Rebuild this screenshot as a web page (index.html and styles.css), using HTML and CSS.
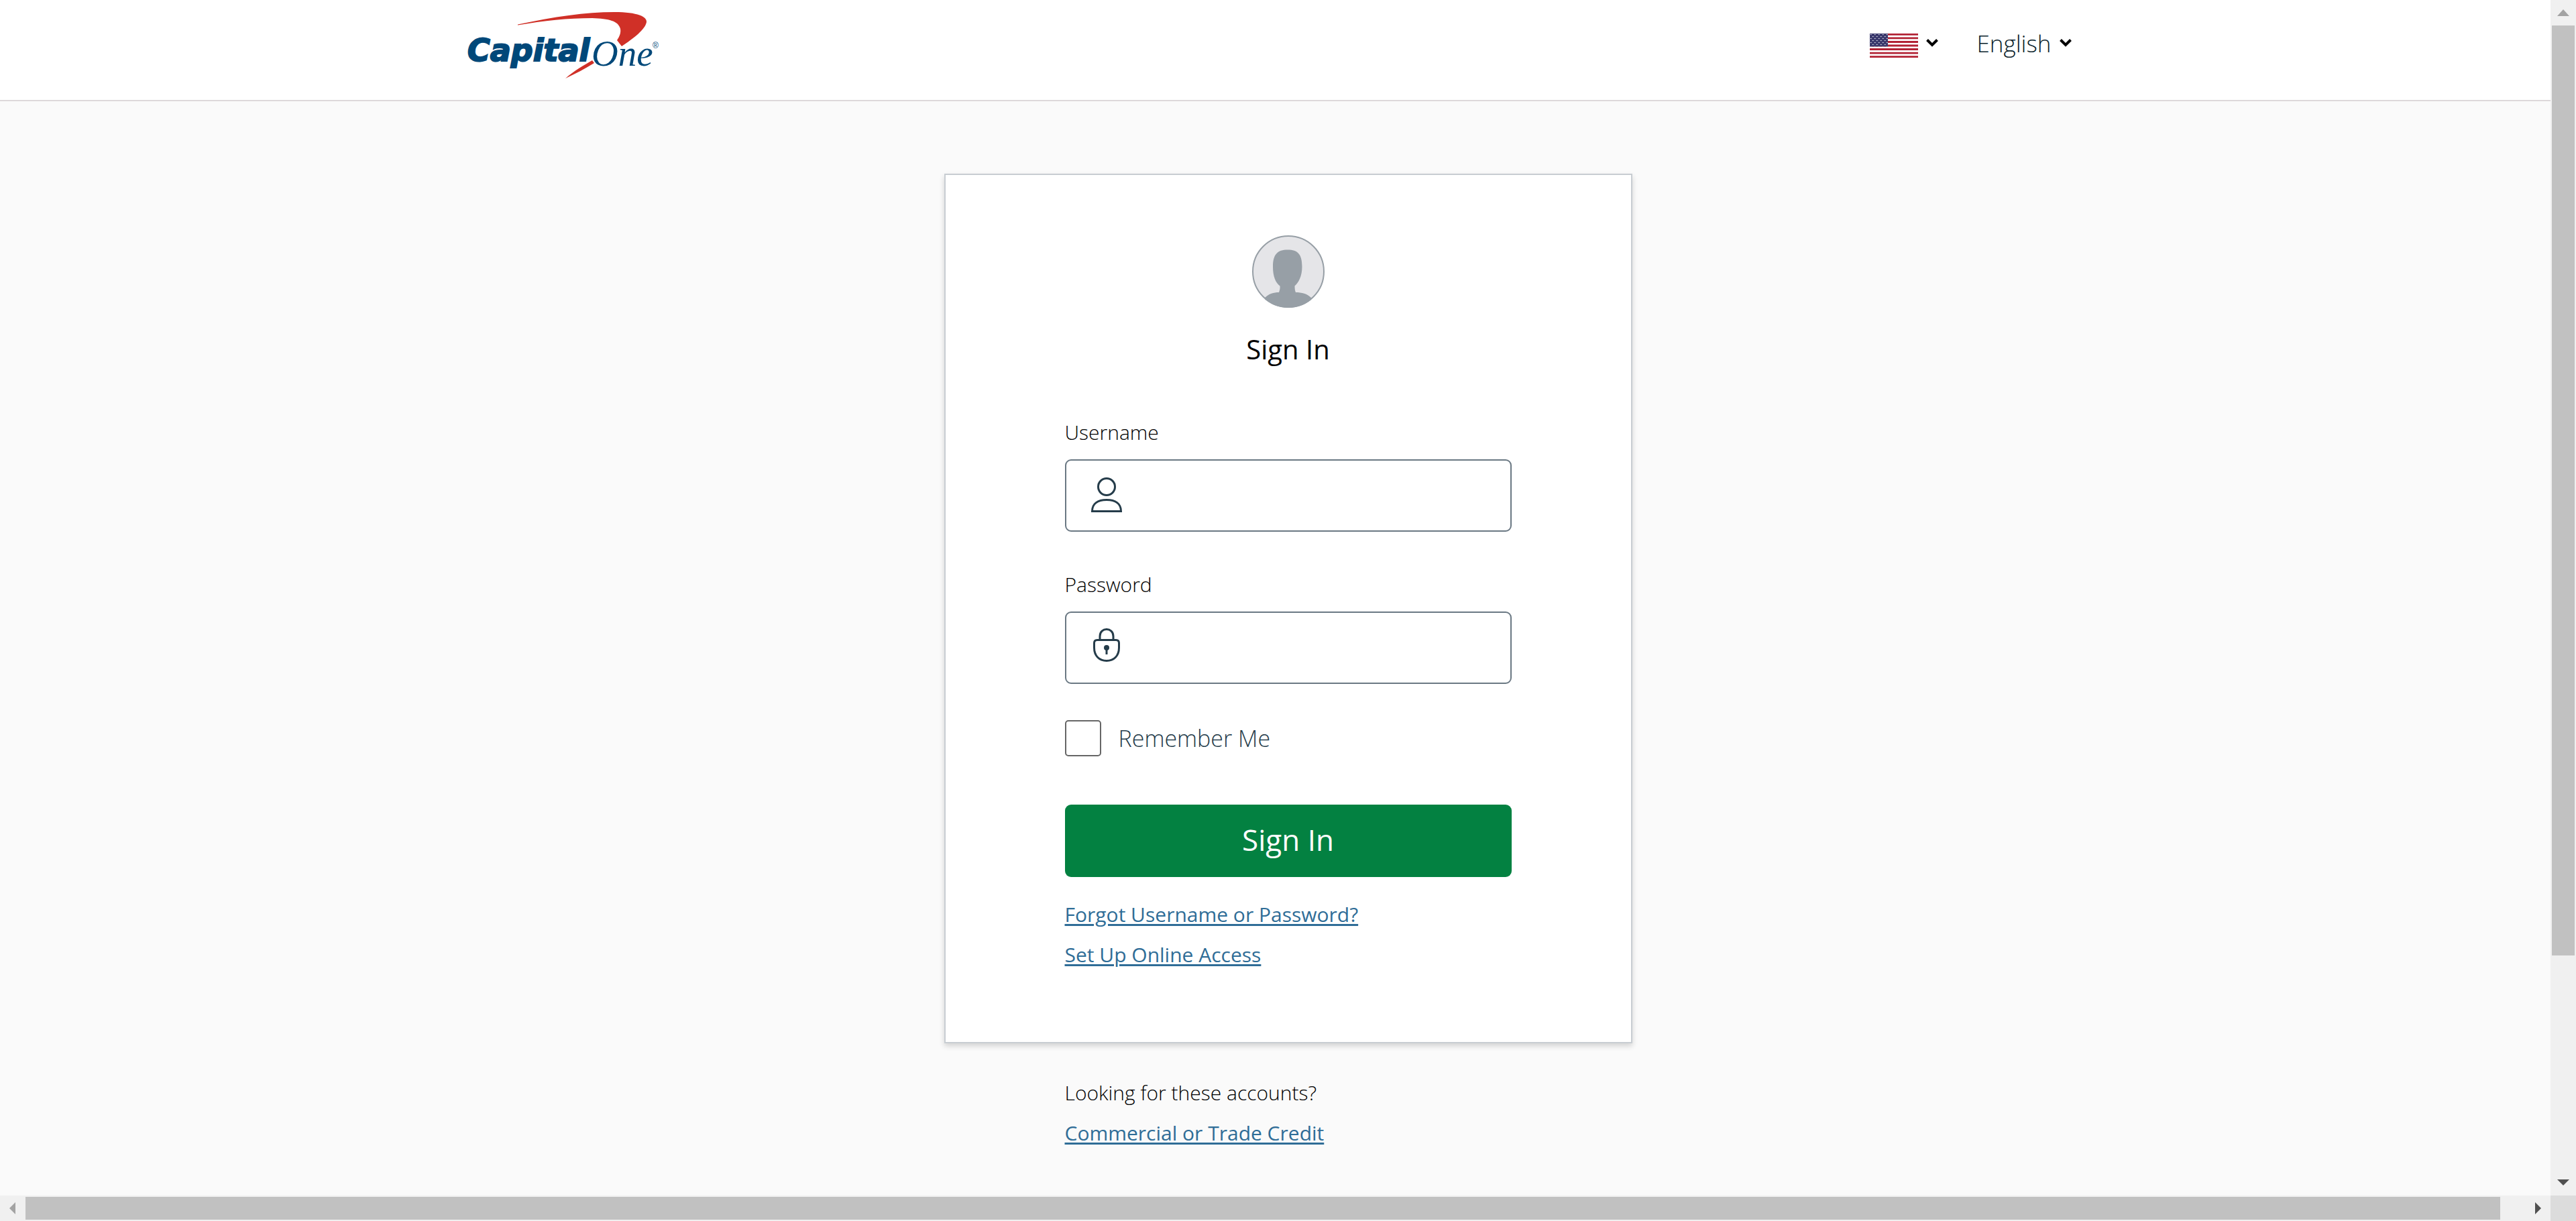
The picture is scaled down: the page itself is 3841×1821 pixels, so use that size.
FILE: index.html
```html
<!DOCTYPE html>
<html lang="en">
<head>
<meta charset="utf-8">
<title>Sign In</title>
<link rel="stylesheet" href="styles.css">
</head>
<body>
<div class="window">
  <div class="viewport">
    <div class="page">
      <header class="site-header">
        <div class="header-inner">
          <a class="logo" href="#" aria-label="Capital One home">
            <svg width="300" height="110" viewBox="690 10 300 110">
              <path fill="#d03027" d="M771 36.500C825 25 872 18 915 18C950 18 964 25 963 33C961 44 944 57 926 69L919 60C923 54 925 49 924 43C921 31 907 28 882 27C846 27 810 31 771 37.500Z"/>
              <path fill="#d03027" d="M882 90C870 97 854 106 842 117C857 110 872 102 885 94Z"/>
              <text class="logo-capital" x="696" y="91">Capital</text>
              <text class="logo-one" x="881" y="98">One</text>
              <text class="logo-mark" x="972" y="72">®</text>
            </svg>
          </a>
          <div class="pickers">
            <button class="picker" type="button" aria-label="Country: United States">
              <svg class="flag" width="72" height="36" viewBox="0 0 72 36">
                <defs>
                  <pattern id="stars" width="6" height="6" patternUnits="userSpaceOnUse">
                    <rect x="1" y="1" width="1" height="1" fill="#fff"/>
                    <rect x="4" y="4" width="1" height="1" fill="#fff"/>
                    <rect x="2" y="1" width="1" height="1" fill="#8d8cab"/>
                    <rect x="5" y="4" width="1" height="1" fill="#8d8cab"/>
                  </pattern>
                </defs>
                <rect width="72" height="36" fill="#fff"/>
                <path stroke="#b22234" stroke-width="2.77" d="M0 1.4H72M0 6.9H72M0 12.5H72M0 18H72M0 23.5H72M0 29.1H72M0 34.6H72"/>
                <rect width="27" height="19.4" fill="#3c3b6e"/>
                <rect width="27" height="19.4" fill="url(#stars)"/>
              </svg>
              <svg class="chevron" width="18" height="12" viewBox="0 0 18 12"><path d="M1.500 1.500L9 9L16.500 1.500"/></svg>
            </button>
            <div class="picker">
              <select class="language" aria-label="Language"><option>English</option></select>
              <svg class="chevron" width="18" height="12" viewBox="0 0 18 12"><path d="M1.500 1.500L9 9L16.500 1.500"/></svg>
            </div>
          </div>
        </div>
      </header>

      <main class="content">
        <form class="card">
          <svg class="avatar" width="108" height="108" viewBox="0 0 108 108">
            <defs><clipPath id="disc"><circle cx="54" cy="54" r="54"/></clipPath></defs>
            <circle cx="54" cy="54" r="53" fill="#e5e5e8" stroke="#979fa6" stroke-width="2"/>
            <path clip-path="url(#disc)" fill="#979fa6" d="M53 21.500C68 21.500 74.500 28 74.500 47C74.500 61 69 71 63.500 75.500C63.500 80 64 83 65 85C74 85 82 87 88 93L88 108H19V93C25 87 32 85 40 85C41 82 42 79 41.500 75.500C35 71 31 61 31 47C31 28 38 21.500 53 21.500Z"/>
          </svg>
          <h1 class="title">Sign In</h1>

          <div class="field">
            <label class="field-label" for="username">Username</label>
            <div class="field-box">
              <svg class="field-icon" width="46" height="52" viewBox="0 0 46 52">
                <ellipse cx="23" cy="14" rx="12.500" ry="12.500"/>
                <path d="M1.500 50.500C1.500 39 10 33.500 23 33.500S44.500 39 44.500 50.500Z"/>
              </svg>
              <input class="field-input" id="username" type="text">
            </div>
          </div>

          <div class="field">
            <label class="field-label" for="password">Password</label>
            <div class="field-box">
              <svg class="field-icon" width="46" height="52" viewBox="0 2 46 52">
                <path d="M13 17V12C13 -2 33 -2 33 12V17"/>
                <path d="M9 17.500H37Q41.500 17.500 41.500 22V29C41.500 41 34 48.500 23 48.500S4.500 41 4.500 29V22Q4.500 17.500 9 17.500Z"/>
                <circle class="keyhole" cx="23" cy="29" r="4"/>
                <path d="M23 30V39"/>
              </svg>
              <input class="field-input" id="password" type="password">
            </div>
          </div>

          <div class="remember">
            <input class="remember-box" id="remember" type="checkbox">
            <label class="remember-label" for="remember">Remember Me</label>
          </div>

          <button class="submit" type="submit">Sign In</button>
          <a class="link" href="#">Forgot Username or Password?</a>
          <a class="link" href="#">Set Up Online Access</a>
        </form>

        <section class="other">
          <p class="other-text">Looking for these accounts?</p>
          <a class="link" href="#">Commercial or Trade Credit</a>
        </section>
      </main>
    </div>
  </div>

  <div class="bar bar-vertical">
    <svg class="bar-arrow" width="38" height="38" viewBox="0 0 38 38"><path fill="#a3a3a3" d="M19 14L28 24H10Z"/></svg>
    <div class="bar-track"><div class="thumb-vertical"></div></div>
    <svg class="bar-arrow" width="38" height="38" viewBox="0 0 38 38"><path fill="#505050" d="M10 14H28L19 23Z"/></svg>
  </div>
  <div class="bar bar-horizontal">
    <svg class="bar-arrow" width="38" height="38" viewBox="0 0 38 38"><path fill="#a3a3a3" d="M23 10V28L14 19Z"/></svg>
    <div class="bar-track"><div class="thumb-horizontal"></div></div>
    <svg class="bar-arrow" width="38" height="38" viewBox="0 0 38 38"><path fill="#505050" d="M15 10L24 19L15 28Z"/></svg>
  </div>
  <div class="bar-corner"></div>
</div>
</body>
</html>
```
FILE: styles.css
```css
* {
  box-sizing: border-box;
}

body {
  margin: 0;
  background: #fafafa;
  color: #000;
  font-family: "Open Sans", "Noto Sans", sans-serif;
  font-size: 30px;
}

button,
input,
select {
  font-family: inherit;
}

/* Window frame: page area with a scrollbar on two sides */
.window {
  display: grid;
  grid-template-columns: minmax(0, 1fr) 38px;
  grid-template-rows: minmax(0, 1fr) 38px;
  height: 100vh;
}

.viewport {
  overflow: hidden;
}

.page {
  width: 100vw;
}

/* Header */
.site-header {
  background: #fff;
  border-bottom: 2px solid #ddd8da;
}

.header-inner {
  display: flex;
  justify-content: space-between;
  align-items: flex-start;
  max-width: 2460px;
  min-height: 149px;
  margin: 0 auto;
  padding: 10px 62px 0 0;
}

.logo svg {
  display: block;
}

.logo-capital {
  font: italic bold 46px "DejaVu Sans", sans-serif;
  fill: #004879;
  stroke: #004879;
  stroke-width: 2px;
}

.logo-one {
  font: italic 55px "Liberation Serif", serif;
  fill: #004879;
}

.logo-mark {
  font: 12px "Liberation Sans", sans-serif;
  fill: #004879;
}

.pickers {
  display: flex;
  gap: 58px;
  padding-top: 30px;
}

.picker {
  display: flex;
  align-items: flex-start;
  gap: 12px;
  height: 50px;
  padding: 0;
  border: 0;
  background: none;
}

.flag {
  margin-top: 10px;
}

.chevron {
  margin-top: 18px;
  fill: none;
  stroke: #000;
  stroke-width: 4px;
}

.language {
  appearance: none;
  height: 50px;
  padding: 0;
  border: 0;
  background: none;
  color: #0b1f2b;
  font-size: 35px;
  font-weight: 300;
  line-height: 50px;
}

/* Sign in card */
.content {
  display: flex;
  flex-direction: column;
  align-items: center;
  padding: 108px 0 60px;
}

.card {
  display: flex;
  flex-direction: column;
  width: 100%;
  max-width: 1026px;
  padding: 90px 178px 100px;
  border: 2px solid #c8cdd2;
  background: #fff;
  box-shadow: 0 4px 8px rgba(0, 0, 0, 0.16);
}

.avatar {
  align-self: center;
}

.title {
  margin: 38px 0 80px;
  font-size: 40px;
  font-weight: 400;
  line-height: 48px;
  text-align: center;
}

.field {
  display: flex;
  flex-direction: column;
  gap: 20px;
  margin-bottom: 59px;
}

.field + .remember {
  margin-top: -5px;
}

.field-label {
  font-weight: 300;
  line-height: 40px;
}

.field-box {
  display: flex;
  height: 108px;
  padding: 25px 37px;
  gap: 20px;
  border: 2px solid #6a7883;
  border-radius: 9px;
}

.field-icon {
  flex: none;
  overflow: visible;
  fill: none;
  stroke: #253c4a;
  stroke-width: 3px;
}

.keyhole {
  fill: #253c4a;
  stroke: none;
}

.field-input {
  flex: 1;
  min-width: 0;
  padding: 0;
  border: 0;
  outline: 0;
  background: none;
  font-size: 35px;
}

.remember {
  display: flex;
  align-items: center;
  gap: 26px;
  margin-bottom: 72px;
}

.remember-box {
  appearance: none;
  width: 54px;
  height: 54px;
  margin: 0;
  border: 2px solid #666;
  border-radius: 5px;
  background: #fff;
}

.remember-label {
  color: #253c4a;
  font-size: 34px;
  font-weight: 300;
  line-height: 48px;
}

.submit {
  height: 108px;
  margin-bottom: 26px;
  padding: 0 0 4px;
  border: 0;
  border-radius: 9px;
  background: #038141;
  color: #fff;
  font-size: 44px;
}

.link {
  align-self: flex-start;
  color: #2f6d97;
  line-height: 60px;
  text-decoration-thickness: 3px;
  text-underline-offset: 3px;
}

.other {
  display: flex;
  flex-direction: column;
  width: 100%;
  max-width: 666px;
  margin-top: 44px;
}

.other-text {
  margin: 0;
  font-weight: 300;
  line-height: 60px;
}

/* Scrollbars */
.bar {
  display: flex;
  background: #f0f0f0;
}

.bar-vertical {
  flex-direction: column;
}

.bar-arrow {
  flex: none;
}

.bar-track {
  flex: 1;
}

.bar-vertical .bar-track {
  padding: 0 2px;
}

.bar-horizontal .bar-track {
  padding: 2px 0;
}

.thumb-vertical {
  height: 81.25%;
  background: #c1c1c1;
}

.thumb-horizontal {
  width: 99%;
  height: 100%;
  background: #c1c1c1;
}

.bar-corner {
  background: #dcdcdc;
}
```
